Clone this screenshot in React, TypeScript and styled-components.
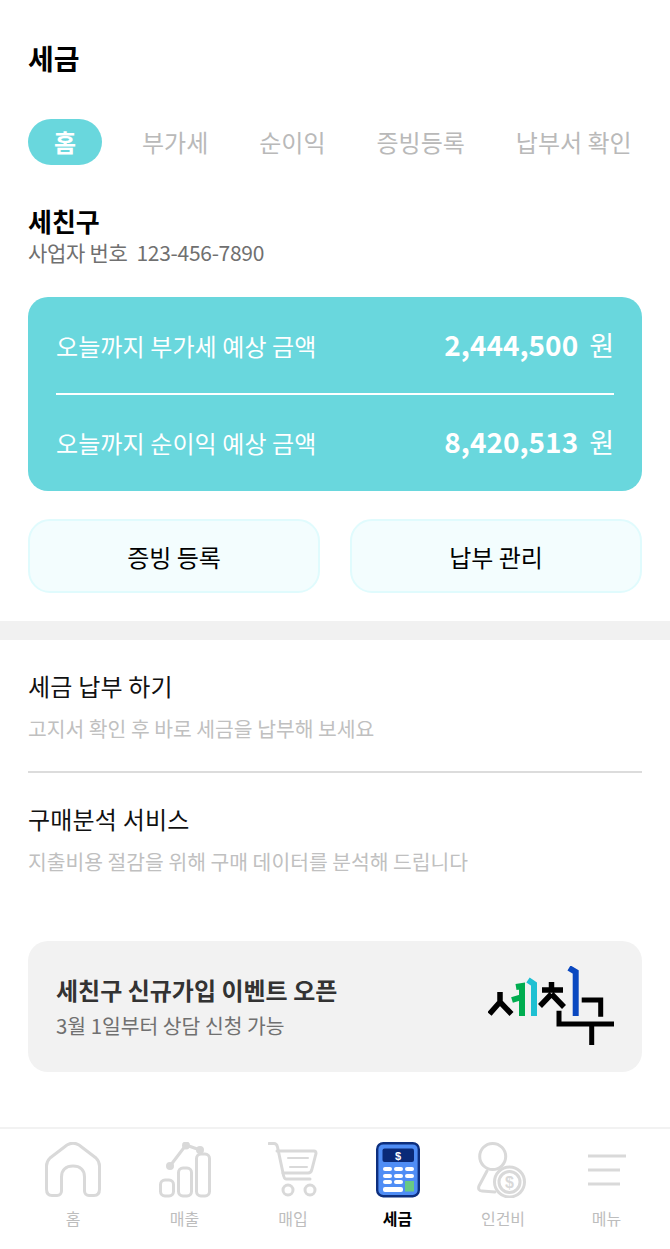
import React from "react";
import styled, { createGlobalStyle } from "styled-components";

const Global = createGlobalStyle`
  html, body { margin: 0; padding: 0; background: #fff; }
  body { font-family: "Noto Sans CJK KR", "Noto Sans", sans-serif; width: 670px; }
  * { box-sizing: border-box; }
`;
const Page = styled.div`width: 670px; height: 1249px; display: flex; flex-direction: column; overflow: hidden; background: #fff;`;
const Header = styled.h1`margin: 0; padding: 39px 28px 0; height: 119px; font-size: 28px; line-height: 38px; font-weight: 700; color: #000;`;
const Tabs = styled.nav`display: flex; align-items: center; gap: 51px; height: 46px; padding-left: 28px; white-space: nowrap;`;
const Tab = styled.div`
  height: 46px; padding-bottom: 2px; display: flex; align-items: center; justify-content: center;
  font-size: 24px; flex: none; color: #b9b9b9; font-weight: 400;
`;
const ActiveTab = styled(Tab)`
  width: 74px; margin-right: -11px; color: #fff; font-weight: 700; background: #69d7dd; border-radius: 23px;
`;
const Biz = styled.section`padding: 38px 28px 0; height: 132px;`;
const BizName = styled.div`font-size: 26px; line-height: 34px; font-weight: 700; color: #000; margin-top: 1px;`;
const BizNo = styled.div`font-size: 21px; line-height: 28px; color: #707070; letter-spacing: -0.3px; display: flex; gap: 9px;`;
const Card = styled.section`margin: 0 28px; height: 194px; background: #69d7dd; border-radius: 20px; padding: 0 28px; display: flex; flex-direction: column;`;
const CardRow = styled.div`height: 97px; display: flex; align-items: center; justify-content: space-between; color: #fff;`;
const CardDivider = styled.div`height: 2px; background: #fff; margin: -1px 0;`;
const CardLabel = styled.div`font-size: 24px; letter-spacing: 0.1px;`;
const CardValue = styled.div`display: flex; align-items: center; gap: 11px; padding: 0 0 3px 0; font-size: 28px; font-weight: 700;`;
const Won = styled.span`font-size: 27px; font-weight: 400;`;
const Buttons = styled.div`display: flex; gap: 30px; padding: 28px 28px 0; height: 130px;`;
const Btn = styled.button`flex: 1; height: 74px; border-radius: 22px; border: 2px solid #e0fbfd; background: #f3fdfe; color: #000; font: 400 24px "Noto Sans CJK KR", sans-serif;`;
const Band = styled.div`height: 19px; background: #f1f1f1; flex: none;`;
const List = styled.section`padding: 0 28px; flex: none;`;
const Item = styled.div<{ $line?: boolean }>`
  height: 133px; padding-top: 27px;
  border-bottom: ${p => (p.$line ? "2px solid #dcdcdc" : "none")};
`;
const ItemTitle = styled.div`font-size: 24px; line-height: 38px; color: #111; letter-spacing: 0.2px;`;
const ItemSub = styled.div`font-size: 20.4px; line-height: 32px; margin-top: 7px; color: #c0c0c0;`;
const Banner = styled.section`margin: 35px 28px 0; height: 131px; background: #f2f2f2; border-radius: 20px; padding: 0 27px 2px 28px; display: flex; align-items: center; justify-content: space-between; flex: none;`;
const BannerTitle = styled.div`font-size: 24px; line-height: 34px; font-weight: 700; color: #333;`;
const BannerSub = styled.div`font-size: 20.4px; line-height: 28px; margin-top: 4px; color: #707070;`;
const Nav = styled.nav`margin-top: auto; height: 122px; border-top: 2px solid #f2f2f2; display: flex; gap: 57.5px; padding: 13px 0 0 45px; flex: none;`;
const NavItem = styled.div<{ $active?: boolean }>`
  display: flex; flex-direction: column; align-items: center;
  font-size: 16px; line-height: 24px; color: ${p => (p.$active ? "#000" : "#bdbdbd")}; font-weight: ${p => (p.$active ? 700 : 400)};
`;
const IconBox = styled.div`height: 56px; display: flex; align-items: center; margin-bottom: 8px;`;

const G = { fill: "none", stroke: "#d9d9d9", strokeWidth: 3, strokeLinecap: "round" as const, strokeLinejoin: "round" as const };

const Home = () => (
  <svg width="56" height="56" viewBox="0 0 56 56" {...G}>
    <path d="M1.5 24 C1.5 20 3 18 5 16 L22 3 C26 0.5 30 0.5 34 3 L51 16 C53 18 54.5 20 54.5 24 L54.5 47 C54.5 51 52.5 53.5 49 53.5 L44 53.5 C41.5 53.5 39.5 51.5 39.5 49 L39.5 35 C39.5 28 35 24 28 24 C21 24 16.5 28 16.5 35 L16.5 49 C16.5 51.5 14.5 53.5 12 53.5 L7 53.5 C3.5 53.5 1.5 51 1.5 47 Z" />
  </svg>
);
const Sales = () => (
  <svg width="52" height="56" viewBox="0 0 52 56" {...G}>
    <rect x="1.5" y="38" width="13" height="16" rx="4.5" />
    <rect x="19.5" y="26" width="13" height="28" rx="4.5" />
    <rect x="37.5" y="12" width="13" height="42" rx="4.5" />
    <path d="M11 24 L27 3 L41 8" />
    <circle cx="11" cy="24" r="2.5" fill="#d9d9d9" /><circle cx="27" cy="3.5" r="2.5" fill="#d9d9d9" /><circle cx="41" cy="8" r="2.5" fill="#d9d9d9" />
  </svg>
);
const Cart = () => (
  <svg width="50" height="56" viewBox="0 0 50 56" {...G}>
    <path d="M1 1.5 L6 1.5 C8 1.5 9 3 9.5 5 L15 31 C15.5 34 16 37 18 37 L42 37" />
    <path d="M9 9 L46 9 C47.5 9 48 10 48 11.5 L44 27 C43.5 29.5 42 31 40 31 L15 31" />
    <path d="M20 16 L40 16 M22 25 L39 25" strokeWidth="2" />
    <circle cx="20" cy="48" r="5" /><circle cx="42" cy="48" r="5" />
  </svg>
);
const Tax = () => (
  <svg width="44" height="56" viewBox="0 0 44 56">
    <rect x="1.2" y="1.2" width="41.6" height="53" rx="6" fill="#4f8df5" stroke="#0d2f7e" strokeWidth="2.4" />
    <rect x="6.5" y="6.5" width="31.5" height="13.5" rx="2" fill="#0a2a78" />
    <text x="22" y="17.5" fontSize="11" fontWeight="700" fill="#fff" textAnchor="middle" fontFamily="Liberation Sans">$</text>
    {[25, 32, 38].map(y => [7, 18, 29].map(x => (y === 38 && x === 29 ? null : <rect key={`${x}-${y}`} x={x} y={y} width="9" height="4" rx="2" fill="#fff" />)))}
    <rect x="7" y="45" width="20" height="5" rx="2" fill="#fff" />
    <rect x="29" y="39" width="9" height="10.5" fill="#68c984" />
  </svg>
);
const Labor = () => (
  <svg width="52" height="56" viewBox="0 0 52 56" {...G}>
    <circle cx="15.7" cy="14.5" r="13" />
    <path d="M10 29 L2 44 C1 47 2 49 5 49 L18 50" />
    <circle cx="32.5" cy="40" r="15" fill="#fff" />
    <circle cx="32.5" cy="40" r="10.5" />
    <text x="32.5" y="46" fontSize="16" fontWeight="700" fill="#d9d9d9" stroke="none" textAnchor="middle" fontFamily="Liberation Sans">$</text>
  </svg>
);
const Menu = () => (
  <svg width="40" height="32" viewBox="0 0 40 32" stroke="#d9d9d9" strokeWidth="3">
    <path d="M1 2 H39 M1 16 H33 M1 30 H33" />
  </svg>
);
const Logo = () => (
  <svg width="127" height="80" viewBox="0 0 127 80" fill="none" strokeWidth="5.5">
    <path d="M12 26 V36 L1.5 48 M12 36 L23.5 48" stroke="#000" />
    <path d="M28 21 L34 20 V50 M24 34 L34 31" stroke="#00ad50" strokeWidth="6" />
    <path d="M40 14 L46 18 V50" stroke="#1fc0d2" strokeWidth="6" />
    <path d="M63.5 16 V24 M54 24 H75 M63.5 28 L52 40 M63.5 28 L76 41" stroke="#000" />
    <path d="M81 2 L87.7 6 V50" stroke="#0a48c0" strokeWidth="6" />
    <path d="M93.7 34 H112.7 V50.7 M71 44.7 V58 H126 M103.7 58 V79" stroke="#000" strokeWidth="5" />
  </svg>
);

const navs = [
  { l: "홈", i: <Home /> }, { l: "매출", i: <Sales /> }, { l: "매입", i: <Cart /> },
  { l: "세금", i: <Tax />, a: true }, { l: "인건비", i: <Labor /> }, { l: "메뉴", i: <Menu /> },
];

export default function App() {
  return (
    <Page>
      <Global />
      <Header>세금</Header>
      <Tabs>
        <ActiveTab>홈</ActiveTab>
        <Tab>부가세</Tab>
        <Tab>순이익</Tab>
        <Tab>증빙등록</Tab>
        <Tab>납부서 확인</Tab>
      </Tabs>
      <Biz>
        <BizName>세친구</BizName>
        <BizNo><span>사업자 번호</span><span>123-456-7890</span></BizNo>
      </Biz>
      <Card>
        <CardRow><CardLabel>오늘까지 부가세 예상 금액</CardLabel><CardValue>2,444,500 <Won>원</Won></CardValue></CardRow>
        <CardDivider />
        <CardRow><CardLabel>오늘까지 순이익 예상 금액</CardLabel><CardValue>8,420,513 <Won>원</Won></CardValue></CardRow>
      </Card>
      <Buttons><Btn>증빙 등록</Btn><Btn>납부 관리</Btn></Buttons>
      <Band />
      <List>
        <Item $line><ItemTitle>세금 납부 하기</ItemTitle><ItemSub>고지서 확인 후 바로 세금을 납부해 보세요</ItemSub></Item>
        <Item><ItemTitle>구매분석 서비스</ItemTitle><ItemSub>지출비용 절감을 위해 구매 데이터를 분석해 드립니다</ItemSub></Item>
      </List>
      <Banner>
        <div><BannerTitle>세친구 신규가입 이벤트 오픈</BannerTitle><BannerSub>3월 1일부터 상담 신청 가능</BannerSub></div>
        <Logo />
      </Banner>
      <Nav>
        {navs.map(n => <NavItem key={n.l} $active={n.a}><IconBox>{n.i}</IconBox>{n.l}</NavItem>)}
      </Nav>
    </Page>
  );
}
